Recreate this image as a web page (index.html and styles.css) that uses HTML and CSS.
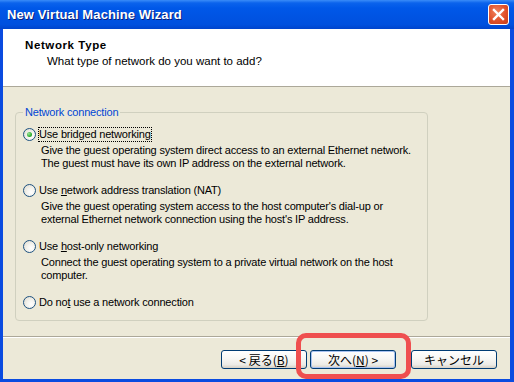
FILE: index.html
```html
<!DOCTYPE html>
<html lang="en">
<head>
    <title>New Virtual Machine Wizard</title>
    <meta charset="utf-8" />
    <link rel="stylesheet" href="styles.css">
</head>
<body>

<div class="win">
    <div class="titlebar">
        <span class="title">New Virtual Machine Wizard</span>
        <span class="close">
            <svg width="13" height="13" viewBox="0 0 13 13"><path d="M2 2 L11 11 M11 2 L2 11" stroke="#fff" stroke-width="2.4" stroke-linecap="square"/></svg>
        </span>
    </div>
    <div class="client">
        <div class="head">
            <p class="h1">Network Type</p>
            <p class="h2">What type of network do you want to add?</p>
        </div>
        <div class="main">
            <fieldset class="group">
                <legend>Network connection</legend>
                <div class="opt">
                    <div class="row"><span class="radio on"></span><span class="lbl focus">Use bridged networking</span></div>
                    <p class="desc">Give the guest operating system direct access to an external Ethernet network.<br>The guest must have its own IP address on the external network.</p>
                </div>
                <div class="opt">
                    <div class="row"><span class="radio"></span><span class="lbl">Use <u>n</u>etwork address translation (NAT)</span></div>
                    <p class="desc">Give the guest operating system access to the host computer's dial-up or<br>external Ethernet network connection using the host's IP address.</p>
                </div>
                <div class="opt">
                    <div class="row"><span class="radio"></span><span class="lbl">Use <u>h</u>ost-only networking</span></div>
                    <p class="desc">Connect the guest operating system to a private virtual network on the host<br>computer.</p>
                </div>
                <div class="opt">
                    <div class="row"><span class="radio"></span><span class="lbl">Do no<u>t</u> use a network connection</span></div>
                </div>
            </fieldset>
        </div>
        <div class="foot">
            <span class="btn">&lt; 戻る(<u>B</u>)</span>
            <span class="btn def">次へ(<u>N</u>) &gt;</span>
            <span class="btn cancel">キャンセル</span>
        </div>
    </div>
    <div class="mark"></div>
</div>

</body>
</html>
```

FILE: styles.css
```css
*{margin:0;padding:0;box-sizing:border-box;}
body{background:#fff;font:11px/13px "Liberation Sans","Noto Sans CJK JP",sans-serif;color:#000;letter-spacing:-0.18px;}

.win{width:514px;height:382px;position:relative;display:flex;flex-direction:column;background:#0054e3;}

.titlebar{height:29px;display:flex;align-items:center;justify-content:space-between;padding:0 5px 0 7px;
    background:linear-gradient(#3a8cf8 0,#0b63ec 3px,#0058e8 8px,#0054e3 55%,#0050de 85%,#0044cc 100%);}
.title{color:#fff;font:bold 13px/16px "Liberation Sans",sans-serif;text-shadow:1px 1px 0 #0a1e7a;letter-spacing:0.1px;}
.close{width:21px;height:21px;border:1px solid #fff;border-radius:3px;display:flex;align-items:center;justify-content:center;
    background:radial-gradient(circle at 40% 35%,#f0835e 0,#e0502a 55%,#c43d1a 100%);}

.client{flex:1;display:flex;flex-direction:column;background:#ece9d8;border:3px solid #0a4be0;border-top:0;border-right-width:4px;}

.head{height:58px;background:#fff;border-bottom:1px solid #aca899;padding:9px 0 0 22px;font-size:11.5px;letter-spacing:0;}
.h1{font-weight:bold;line-height:14px;letter-spacing:0.6px;}
.h2{line-height:14px;margin-top:2px;padding-left:22px;}

.main{flex:1;padding:18px 0 0 12px;}
.group{width:413px;border:1px solid #d0d0bf;border-radius:4px;padding:7px 0 10px 7px;}
.group legend{color:#0046d5;line-height:14px;padding:0 2px;}

.opt{margin-bottom:12px;}
.opt:last-child{margin-bottom:0;}
.row{height:16px;display:flex;align-items:center;}
.radio{width:13px;height:13px;border:1px solid #1c5180;border-radius:50%;position:relative;
    background:radial-gradient(circle at 65% 65%,#fff 0,#f4f3ee 40%,#dcd8ca 100%);}
.radio.on:after{content:"";position:absolute;left:3px;top:3px;width:5px;height:5px;border-radius:50%;
    background:radial-gradient(circle at 35% 35%,#9ce29c 0,#2fb02f 60%,#1a8a1a 100%);}
.lbl{margin-left:2px;padding:1px;line-height:13px;}
.lbl.focus{outline:1px dotted #000;outline-offset:-1px;}
.desc{padding-left:18px;margin-top:2px;line-height:13px;}

.foot{height:43px;border-top:1px solid #aca899;box-shadow:inset 0 1px 0 #fff;display:flex;justify-content:flex-end;padding:13px 13px 0 0;}
.btn{width:86px;height:19px;border:1px solid #003c74;border-radius:3px;display:flex;align-items:center;justify-content:center;
    font:12px/16px "Noto Sans CJK JP",sans-serif;letter-spacing:0;
    background:linear-gradient(#fff 0,#f7f7f4 45%,#ecebe6 80%,#d6d0c5 100%);margin-left:3px;}
.btn.def{box-shadow:inset 0 0 0 1px #a8c2f0;}
.btn.cancel{margin-left:15px;}

.mark{position:absolute;left:296px;top:333px;width:115px;height:46px;border:5px solid #ef4f4f;border-radius:10px;}
```
